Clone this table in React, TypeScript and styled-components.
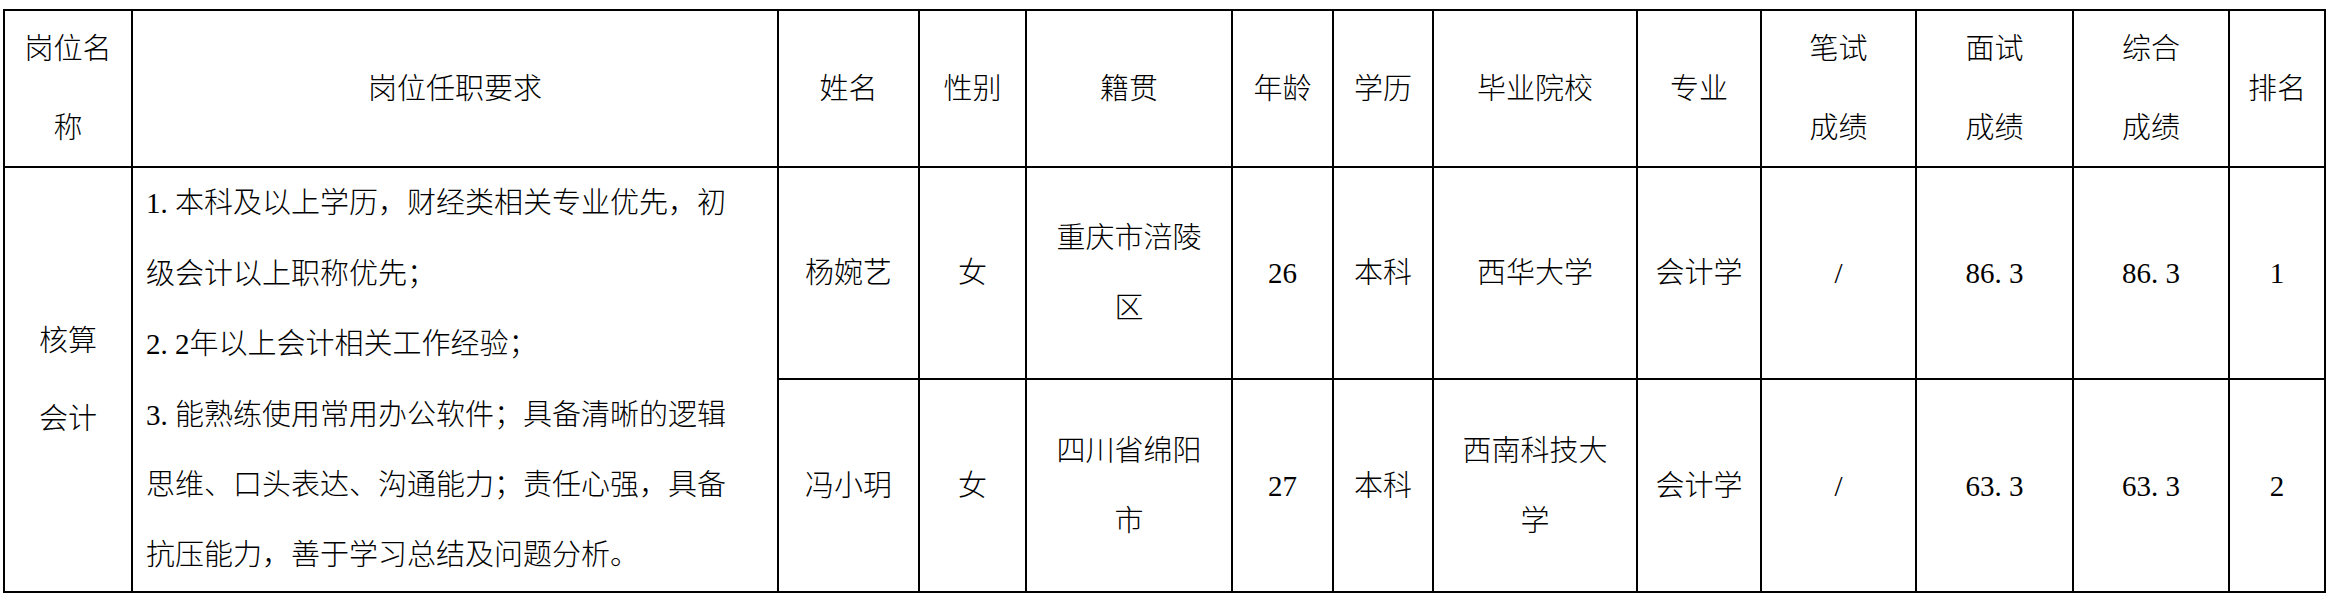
import styled, { createGlobalStyle } from "styled-components"

const GlobalStyle = createGlobalStyle`
  html, body {
    margin: 0;
    background: #fff;
  }
`

// 每列宽度（按表格竖线间距）
const columns = [128, 646, 141, 107, 206, 101, 100, 204, 124, 155, 157, 156, 96]

const Page = styled.div`
  padding: 9px 0 0 3px;
  width: 2338px;
  height: 601px;
  box-sizing: border-box;
  font-family: "Liberation Serif", "Noto Sans CJK SC", serif;
  font-size: 29px;
  font-weight: 300;
  color: #000;
`

const Table = styled.div`
  display: grid;
  grid-template-columns: ${columns.map((w) => `${w}px`).join(" ")};
  grid-template-rows: 157px 212px 213px;
  width: fit-content;
  border-top: 2px solid #000;
  border-left: 2px solid #000;
`

const Cell = styled.div<{ $rows?: number; $lh?: number; $left?: boolean }>`
  grid-row: span ${(p) => p.$rows ?? 1};
  display: flex;
  flex-direction: column;
  justify-content: center;
  align-items: ${(p) => (p.$left ? "flex-start" : "center")};
  padding-left: ${(p) => (p.$left ? "13px" : "0")};
  line-height: ${(p) => p.$lh ?? 70}px;
  border-right: 2px solid #000;
  border-bottom: 2px solid #000;
  box-sizing: border-box;
  overflow: hidden;
`

const Line = styled.span`
  display: block;
  white-space: nowrap;
`

// 宋体的半角句点占半个字宽
const Dot = styled.span`
  display: inline-block;
  width: 0.5em;
`

type CellData = string | string[]

const headers: CellData[] = [
  ["岗位名", "称"],
  "岗位任职要求",
  "姓名",
  "性别",
  "籍贯",
  "年龄",
  "学历",
  "毕业院校",
  "专业",
  ["笔试", "成绩"],
  ["面试", "成绩"],
  ["综合", "成绩"],
  "排名",
]

const requirement = [
  "1.本科及以上学历，财经类相关专业优先，初",
  "级会计以上职称优先；",
  "2.2年以上会计相关工作经验；",
  "3.能熟练使用常用办公软件；具备清晰的逻辑",
  "思维、口头表达、沟通能力；责任心强，具备",
  "抗压能力，善于学习总结及问题分析。",
]

const people: CellData[][] = [
  ["杨婉艺", "女", ["重庆市涪陵", "区"], "26", "本科", "西华大学", "会计学", "/", "86.3", "86.3", "1"],
  ["冯小玥", "女", ["四川省绵阳", "市"], "27", "本科", ["西南科技大", "学"], "会计学", "/", "63.3", "63.3", "2"],
]

function Text({ value }: { value: string }) {
  const parts = value.split(".")
  return (
    <>
      {parts.map((p, i) => (
        <span key={i}>
          {i > 0 ? <Dot>.</Dot> : null}
          {p}
        </span>
      ))}
    </>
  )
}

function Lines({ value }: { value: CellData }) {
  const list = Array.isArray(value) ? value : [value]
  return (
    <>
      {list.map((t, i) => (
        <Line key={i}>
          <Text value={t} />
        </Line>
      ))}
    </>
  )
}

export default function App() {
  return (
    <Page>
      <GlobalStyle />
      <Table>
        {headers.map((h, i) => (
          <Cell key={`h${i}`} $lh={Array.isArray(h) ? 79 : 70}>
            <Lines value={h} />
          </Cell>
        ))}

        <Cell $rows={2} $lh={78}>
          <Lines value={["核算", "会计"]} />
        </Cell>
        <Cell $rows={2} $lh={70.4} $left>
          <Lines value={requirement} />
        </Cell>

        {people.map((row, r) =>
          row.map((v, c) => (
            <Cell key={`r${r}c${c}`}>
              <Lines value={v} />
            </Cell>
          ))
        )}
      </Table>
    </Page>
  )
}
